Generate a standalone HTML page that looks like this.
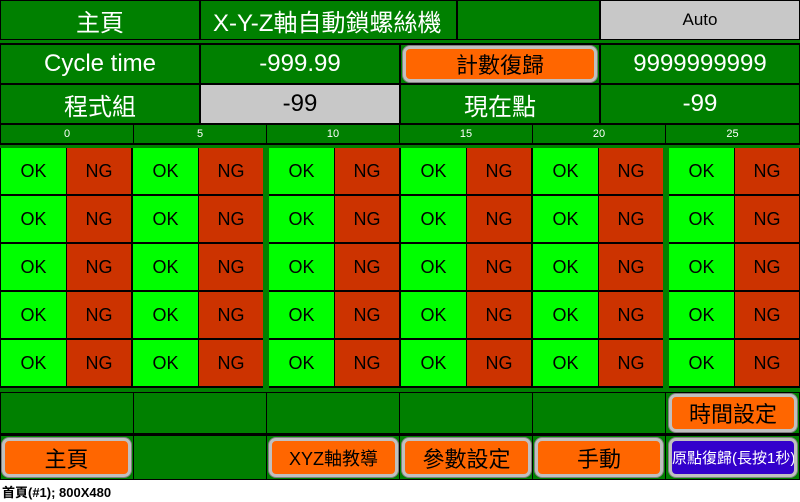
<!DOCTYPE html><html><head><meta charset="utf-8"><style>
*{margin:0;padding:0;box-sizing:border-box}
body{width:800px;height:502px;background:#fff;position:relative;overflow:hidden;font-family:"Liberation Sans","Noto Sans CJK TC",sans-serif}
#s{position:absolute;left:0;top:0;width:800px;height:480px;background:#000}
.c{position:absolute;background:#008000;color:#fff;display:flex;align-items:center;justify-content:center;font-size:24px;white-space:nowrap}
.g{background:#c8c8c8;color:#000}
.b{position:absolute;background:#ff6600;border:3px solid #c0c0c0;border-radius:7px;box-shadow:0 0 0 1px #808080;display:flex;align-items:center;justify-content:center;color:#000;font-size:22px;white-space:nowrap;overflow:hidden}
.i{font-size:11px}
.grp{position:absolute;top:148px;width:130px;height:240px;display:flex;flex-direction:column;gap:2px;background:#000}
.r{display:flex;gap:1px;height:46px}
.r div{display:flex;align-items:center;justify-content:center;font-size:18px;color:#000}
.r div:first-child{width:65px;background:#00ff00}
.r div:last-child{width:64px;background:#cc3300}
#cap{position:absolute;left:2px;top:482px;font-size:13px;font-weight:bold;color:#000;font-family:"Liberation Sans","Noto Sans CJK TC",sans-serif}
</style></head><body><div id="s">
<div class="c" style="left:1px;top:1px;width:198px;height:38px">主頁</div>
<div class="c" style="left:201px;top:1px;width:255px;height:38px;justify-content:flex-start;padding-left:12px">X-Y-Z軸自動鎖螺絲機</div>
<div class="c" style="left:458px;top:1px;width:141px;height:38px"></div>
<div class="c g" style="left:601px;top:1px;width:198px;height:38px;font-size:17px">Auto</div>
<div class="c" style="left:0;top:40px;width:800px;height:3px"></div>
<div class="c" style="left:1px;top:45px;width:198px;height:38px">Cycle time</div>
<div class="c" style="left:201px;top:45px;width:198px;height:38px">-999.99</div>
<div class="c" style="left:401px;top:45px;width:198px;height:38px"></div>
<div class="b" style="left:403px;top:46px;width:194px;height:36px">計數復歸</div>
<div class="c" style="left:601px;top:45px;width:198px;height:38px">9999999999</div>
<div class="c" style="left:1px;top:85px;width:198px;height:38px">程式組</div>
<div class="c g" style="left:201px;top:85px;width:198px;height:38px">-99</div>
<div class="c" style="left:401px;top:85px;width:198px;height:38px">現在點</div>
<div class="c" style="left:601px;top:85px;width:198px;height:38px">-99</div>
<div class="c i" style="left:1px;top:125px;width:132px;height:18px">0</div>
<div class="c i" style="left:134px;top:125px;width:132px;height:18px">5</div>
<div class="c i" style="left:267px;top:125px;width:132px;height:18px">10</div>
<div class="c i" style="left:400px;top:125px;width:132px;height:18px">15</div>
<div class="c i" style="left:533px;top:125px;width:132px;height:18px">20</div>
<div class="c i" style="left:666px;top:125px;width:133px;height:18px">25</div>
<div class="c" style="left:0;top:145px;width:800px;height:3px"></div>
<div class="c" style="left:131px;top:148px;width:2px;height:240px;background:#000"></div>
<div class="c" style="left:263px;top:148px;width:6px;height:240px"></div>
<div class="c" style="left:663px;top:148px;width:6px;height:240px"></div>
<div class="c" style="left:0;top:388px;width:800px;height:4px"></div>
<div class="grp" style="left:1px"><div class="r"><div>OK</div><div>NG</div></div><div class="r"><div>OK</div><div>NG</div></div><div class="r"><div>OK</div><div>NG</div></div><div class="r"><div>OK</div><div>NG</div></div><div class="r"><div>OK</div><div>NG</div></div></div>
<div class="grp" style="left:133px"><div class="r"><div>OK</div><div>NG</div></div><div class="r"><div>OK</div><div>NG</div></div><div class="r"><div>OK</div><div>NG</div></div><div class="r"><div>OK</div><div>NG</div></div><div class="r"><div>OK</div><div>NG</div></div></div>
<div class="grp" style="left:269px"><div class="r"><div>OK</div><div>NG</div></div><div class="r"><div>OK</div><div>NG</div></div><div class="r"><div>OK</div><div>NG</div></div><div class="r"><div>OK</div><div>NG</div></div><div class="r"><div>OK</div><div>NG</div></div></div>
<div class="grp" style="left:401px"><div class="r"><div>OK</div><div>NG</div></div><div class="r"><div>OK</div><div>NG</div></div><div class="r"><div>OK</div><div>NG</div></div><div class="r"><div>OK</div><div>NG</div></div><div class="r"><div>OK</div><div>NG</div></div></div>
<div class="grp" style="left:533px"><div class="r"><div>OK</div><div>NG</div></div><div class="r"><div>OK</div><div>NG</div></div><div class="r"><div>OK</div><div>NG</div></div><div class="r"><div>OK</div><div>NG</div></div><div class="r"><div>OK</div><div>NG</div></div></div>
<div class="grp" style="left:669px"><div class="r"><div>OK</div><div>NG</div></div><div class="r"><div>OK</div><div>NG</div></div><div class="r"><div>OK</div><div>NG</div></div><div class="r"><div>OK</div><div>NG</div></div><div class="r"><div>OK</div><div>NG</div></div></div>
<div class="c" style="left:1px;top:393px;width:132px;height:40px"></div>
<div class="c" style="left:134px;top:393px;width:132px;height:40px"></div>
<div class="c" style="left:267px;top:393px;width:132px;height:40px"></div>
<div class="c" style="left:400px;top:393px;width:132px;height:40px"></div>
<div class="c" style="left:533px;top:393px;width:132px;height:40px"></div>
<div class="c" style="left:666px;top:393px;width:133px;height:40px"></div>
<div class="b" style="left:669px;top:394px;width:128px;height:38px">時間設定</div>
<div class="c" style="left:1px;top:436px;width:132px;height:43px"></div>
<div class="c" style="left:134px;top:436px;width:132px;height:43px"></div>
<div class="c" style="left:267px;top:436px;width:132px;height:43px"></div>
<div class="c" style="left:400px;top:436px;width:132px;height:43px"></div>
<div class="c" style="left:533px;top:436px;width:132px;height:43px"></div>
<div class="c" style="left:666px;top:436px;width:133px;height:43px"></div>
<div class="b" style="left:2px;top:438px;width:129px;height:39px">主頁</div>
<div class="b" style="left:269px;top:438px;width:129px;height:39px;font-size:18px">XYZ軸教導</div>
<div class="b" style="left:402px;top:438px;width:129px;height:39px">參數設定</div>
<div class="b" style="left:535px;top:438px;width:128px;height:39px">手動</div>
<div class="b" style="left:669px;top:438px;width:128px;height:39px;background:#3300cc;color:#fff;font-size:15px;justify-content:flex-start;padding-left:0">原點復歸(長按1秒)</div>
</div>
<div id="cap">首頁(#1); 800X480</div>
</body></html>
